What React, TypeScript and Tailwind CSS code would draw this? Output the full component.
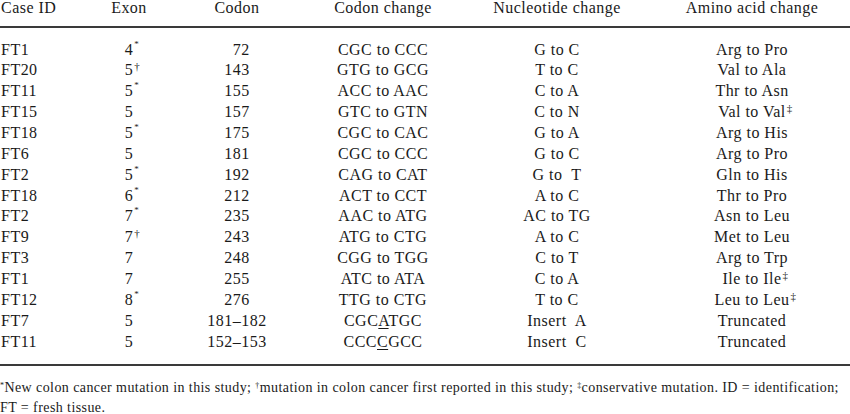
import React from 'react';

type Row = {
    id: string;
    exon: string;
    exonMark?: string;
    codon: string;
    change: React.ReactNode;
    nucleotide: string;
    amino: string;
    aminoMark?: string;
};

const rows: Row[] = [
    { id: 'FT1', exon: '4', exonMark: '*', codon: '\u200772', change: 'CGC to CCC', nucleotide: 'G to C', amino: 'Arg to Pro' },
    { id: 'FT20', exon: '5', exonMark: '†', codon: '143', change: 'GTG to GCG', nucleotide: 'T to C', amino: 'Val to Ala' },
    { id: 'FT11', exon: '5', exonMark: '*', codon: '155', change: 'ACC to AAC', nucleotide: 'C to A', amino: 'Thr to Asn' },
    { id: 'FT15', exon: '5', codon: '157', change: 'GTC to GTN', nucleotide: 'C to N', amino: 'Val to Val', aminoMark: '‡' },
    { id: 'FT18', exon: '5', exonMark: '*', codon: '175', change: 'CGC to CAC', nucleotide: 'G to A', amino: 'Arg to His' },
    { id: 'FT6', exon: '5', codon: '181', change: 'CGC to CCC', nucleotide: 'G to C', amino: 'Arg to Pro' },
    { id: 'FT2', exon: '5', exonMark: '*', codon: '192', change: 'CAG to CAT', nucleotide: 'G to\u00a0 T', amino: 'Gln to His' },
    { id: 'FT18', exon: '6', exonMark: '*', codon: '212', change: 'ACT to CCT', nucleotide: 'A to C', amino: 'Thr to Pro' },
    { id: 'FT2', exon: '7', exonMark: '*', codon: '235', change: 'AAC to ATG', nucleotide: 'AC to TG', amino: 'Asn to Leu' },
    { id: 'FT9', exon: '7', exonMark: '†', codon: '243', change: 'ATG to CTG', nucleotide: 'A to C', amino: 'Met to Leu' },
    { id: 'FT3', exon: '7', codon: '248', change: 'CGG to TGG', nucleotide: 'C to T', amino: 'Arg to Trp' },
    { id: 'FT1', exon: '7', codon: '255', change: 'ATC to ATA', nucleotide: 'C to A', amino: 'Ile to Ile', aminoMark: '‡' },
    { id: 'FT12', exon: '8', exonMark: '*', codon: '276', change: 'TTG to CTG', nucleotide: 'T to C', amino: 'Leu to Leu', aminoMark: '‡' },
    {
        id: 'FT7', exon: '5', codon: '181–182',
        change: <>CGC<span className="underline underline-offset-2">A</span>TGC</>,
        nucleotide: 'Insert\u00a0 A', amino: 'Truncated',
    },
    {
        id: 'FT11', exon: '5', codon: '152–153',
        change: <>CCC<span className="underline underline-offset-2">C</span>GCC</>,
        nucleotide: 'Insert\u00a0 C', amino: 'Truncated',
    },
];

// superscript that hangs to the right without shifting the centred value
const Hang = ({ text, mark }: { text: string; mark?: string }) => (
    <span className="relative inline-block">
        {text}
        {mark && (
            <span className={`absolute left-full ml-[1px] ${mark === '*' ? 'top-[0px] text-[9px]' : 'top-[1px] text-[11px]'} leading-none text-[#1a1a1a]`}>
                {mark}
            </span>
        )}
    </span>
);

const cols = 'grid grid-cols-[90px_78px_138px_154px_194px_196px]';

const App = () => {
    return (
        <div
            className="w-[850px] h-[414px] bg-white text-[#1a1a1a] overflow-hidden"
            style={{ fontFamily: '"Liberation Serif", "Times New Roman", serif' }}
        >
            {/* header */}
            <div className={`${cols} h-[28px] border-b-2 border-[#3a3a3a] text-[16px] leading-[16px] tracking-[0.03em]`}>
                <div className="pl-[1px]">Case ID</div>
                <div className="text-center">Exon</div>
                <div className="text-center">Codon</div>
                <div className="text-center">Codon change</div>
                <div className="text-center">Nucleotide change</div>
                <div className="text-center">Amino acid change</div>
            </div>

            {/* body */}
            <div className="pt-[11.5px] pb-[11.5px] border-b-2 border-[#3a3a3a] text-[16px] leading-[20.86px] tracking-[0.03em]">
                {rows.map((r, i) => (
                    <div key={i} className={cols}>
                        <div className="pl-[1px]">{r.id}</div>
                        <div className="text-center"><Hang text={r.exon} mark={r.exonMark} /></div>
                        <div className="text-center">{r.codon}</div>
                        <div className="text-center">{r.change}</div>
                        <div className="text-center whitespace-pre">{r.nucleotide}</div>
                        <div className="text-center"><Hang text={r.amino} mark={r.aminoMark} /></div>
                    </div>
                ))}
            </div>

            {/* footnote */}
            <div className="pt-[12px] text-[14px] leading-[20px] tracking-[0.03em]">
                <div className="whitespace-nowrap">
                    <sup className="text-[8px]">*</sup>New colon cancer mutation in this study; <sup className="text-[8px]">†</sup>mutation in colon cancer first reported in this study; <sup className="text-[8px]">‡</sup>conservative mutation. ID = identification;
                </div>
                <div>FT = fresh tissue.</div>
            </div>
        </div>
    );
};

export default App;
